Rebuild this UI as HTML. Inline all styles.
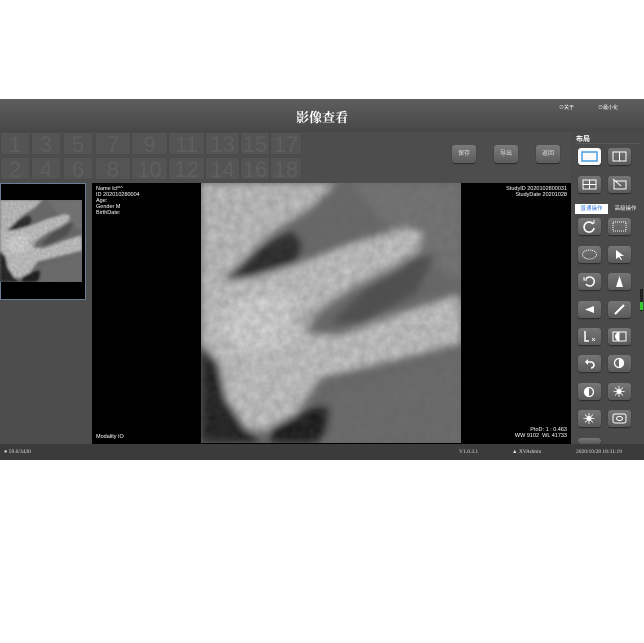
<!DOCTYPE html>
<html><head><meta charset="utf-8"><style>
*{margin:0;padding:0;box-sizing:border-box}
body{width:644px;height:643px;background:#fff;position:relative;overflow:hidden;font-family:"Liberation Sans","Noto Sans CJK SC",sans-serif}
.a{position:absolute}
#app{left:0;top:99px;width:644px;height:361px;background:#4d4d4d}
#hdr{left:0;top:0;width:644px;height:33px;background:linear-gradient(#5e5e5e,#474747)}
.cell{position:absolute;width:30px;height:23px;background:#545454;border:1px solid #4a4a4a;color:#5f5f5f;font-size:22px;text-align:center;line-height:23px;font-family:"Liberation Sans Narrow","Liberation Sans",sans-serif}
.btn{position:absolute;width:24px;height:18px;background:linear-gradient(#7a7a7a,#5c5c5c);border-radius:3px;color:#ddd;font-size:6px;text-align:center;line-height:18px;box-shadow:0 1px 1px #2a2a2a}
.ib{position:absolute;width:23px;height:17px;background:linear-gradient(#767676,#5a5a5a);border-radius:3px;box-shadow:0 1px 1px #2a2a2a}
.ib svg{position:absolute;left:0;top:0}
.t{color:#fff;font-size:5.5px;line-height:6px}
</style></head><body>
<div id="app" class="a">
 <div id="hdr" class="a">
  <div class="a" style="left:0;width:644px;top:8px;text-align:center;color:#fff;font-size:13px;font-weight:bold;font-family:'Noto Serif CJK SC',serif">影像查看</div>
  <div class="a" style="left:559px;top:5px;color:#fff;font-size:5px">⊙关于</div>
  <div class="a" style="left:598px;top:5px;color:#fff;font-size:5px">⊙最小化</div>
 </div>
 <div class="a" style="left:0;top:33px;width:302px;height:50px">
  <div class="cell" style="left:0;top:0">1</div><div class="cell" style="left:31px;top:0">3</div><div class="cell" style="left:63px;top:0">5</div><div class="cell" style="left:95px;top:0;width:36px">7</div><div class="cell" style="left:131px;top:0;width:37px">9</div><div class="cell" style="left:168px;top:0;width:37px">11</div><div class="cell" style="left:205px;top:0;width:35px">13</div><div class="cell" style="left:240px;top:0">15</div><div class="cell" style="left:270px;top:0;width:32px">17</div>
  <div class="cell" style="left:0;top:25px">2</div><div class="cell" style="left:31px;top:25px">4</div><div class="cell" style="left:63px;top:25px">6</div><div class="cell" style="left:95px;top:25px;width:36px">8</div><div class="cell" style="left:131px;top:25px;width:37px">10</div><div class="cell" style="left:168px;top:25px;width:37px">12</div><div class="cell" style="left:205px;top:25px;width:35px">14</div><div class="cell" style="left:240px;top:25px">16</div><div class="cell" style="left:270px;top:25px;width:32px">18</div>
 </div>
 <div class="btn" style="left:452px;top:46px">保存</div>
 <div class="btn" style="left:494px;top:46px">导出</div>
 <div class="btn" style="left:536px;top:46px">返回</div>
 <div class="a" style="left:0;top:84px;width:86px;height:117px;background:#000;border:1px solid #6a7f95"></div>
 <svg class="a" style="left:0;top:101px" width="82" height="82" viewBox="0 0 260 260"><use href="#xr"/></svg>
 <div class="a" style="left:92px;top:84px;width:479px;height:261px;background:#000"></div>
 <svg class="a" style="left:201px;top:84px" width="260" height="260" viewBox="0 0 260 260">
  <defs><g id="xr">
   <filter id="b"><feGaussianBlur stdDeviation="4"/></filter>
   <filter id="n"><feTurbulence type="fractalNoise" baseFrequency="0.12" numOctaves="3"/><feColorMatrix values="0 0 0 0 0.1  0 0 0 0 0.1  0 0 0 0 0.1  0 0 0 0.35 0"/></filter>
   <rect width="260" height="260" fill="#6a6a6a"/>
   <g filter="url(#b)">
    <path d="M150 0H260V100L200 60Z" fill="#767676"/>
    <path d="M0 0H135L110 25 70 50 40 80 20 98 0 100Z" fill="#c4c4c4"/>
    <path d="M22 98 55 65 90 48 100 60 95 85 60 95Z" fill="#262626"/>
    <path d="M130 140 165 105 215 75 235 70 215 110 160 140Z" fill="#4e4e4e"/>
    <path d="M0 100 50 95 100 80 150 60 205 45 222 50 215 70 160 98 120 125 105 150 140 152 200 130 255 112 260 118 260 160 190 178 120 195 95 230 85 250 40 245 20 215 0 175Z" fill="#c9c9c9"/>
    <path d="M0 160 18 180 25 215 45 245 60 260 0 260Z" fill="#1e1e1e"/>
    <path d="M68 245 100 228 135 222 125 250 115 260 70 260Z" fill="#161616"/>
    <path d="M130 215 200 190 260 170 260 260 125 260Z" fill="#6d6d6d"/>
    <path d="M15 140 40 115 90 110 85 165 40 170Z" fill="#dadada"/>
    <path d="M100 140 150 105 200 80" stroke="#9a9a9a" stroke-width="5" fill="none"/>
   </g>
   <rect width="260" height="260" filter="url(#n)"/>
  </g></defs>
  <use href="#xr"/>
 </svg>
 <div class="a t" style="left:96px;top:87px">Name lcf^^<br>ID 202010280004<br>Age:<br>Gender M<br>BirthDate:</div>
 <div class="a t" style="left:440px;top:87px;width:127px;text-align:right">StudyID 2020102800031<br>StudyDate 20201028</div>
 <div class="a t" style="left:96px;top:335px">Modality IO</div>
 <div class="a t" style="left:440px;top:328px;width:127px;text-align:right">PtoD: 1 : 0.463<br>WW 9102 &nbsp;WL 41733</div>
 <div class="a" style="left:571px;top:33px;width:73px;height:312px;background:#4a4a4a"></div>
 <div class="a" style="left:576px;top:35px;color:#fff;font-size:7px;font-weight:bold">布局</div>
 <div class="a" style="left:576px;top:44px;width:64px;height:1px;background:#5a5a5a"></div>
 <div class="ib" style="left:578px;top:49px;background:#fafafa"><svg width="23" height="17"><rect x="4" y="4" width="15" height="9" fill="none" stroke="#4aa0e0" stroke-width="1.5"/></svg></div>
 <div class="ib" style="left:608px;top:49px"><svg width="23" height="17"><rect x="5" y="4" width="13" height="9" fill="none" stroke="#fff"/><path d="M11.5 4V13" stroke="#fff"/></svg></div>
 <div class="ib" style="left:578px;top:77px"><svg width="23" height="17"><rect x="5" y="4" width="13" height="9" fill="none" stroke="#fff"/><path d="M11.5 4V13M5 8.5H18" stroke="#fff"/></svg></div>
 <div class="ib" style="left:608px;top:77px"><svg width="23" height="17"><rect x="6" y="5" width="12" height="8" fill="none" stroke="#fff"/><path d="M5 3 13 10" stroke="#fff"/></svg></div>
 <div class="a" style="left:575px;top:105px;width:33px;height:10px;background:#fff;color:#3a7bd5;font-size:5.5px;line-height:10px;text-align:center">普通操作</div>
 <div class="a" style="left:609px;top:105px;width:33px;height:10px;color:#eee;font-size:5.5px;line-height:10px;text-align:center">高级操作</div>
 <div class="a" style="left:640px;top:190px;width:3px;height:22px;background:#222"></div>
 <div class="a" style="left:640px;top:203px;width:3px;height:8px;background:#3c3"></div>
 <div class="ib" style="left:578px;top:119px"><svg width="23" height="17"><path d="M15 6A5 5 0 1 0 16 10" fill="none" stroke="#fff" stroke-width="1.6"/><path d="M13 5H16V2" fill="none" stroke="#fff"/></svg></div>
 <div class="ib" style="left:608px;top:119px"><svg width="23" height="17"><rect x="5" y="4" width="13" height="9" fill="none" stroke="#fff" stroke-dasharray="1 1"/></svg></div>
 <div class="ib" style="left:578px;top:147px"><svg width="23" height="17"><ellipse cx="11.5" cy="8.5" rx="7" ry="4.5" fill="none" stroke="#fff" stroke-dasharray="1 1"/></svg></div>
 <div class="ib" style="left:608px;top:147px"><svg width="23" height="17"><path d="M8 4 16 10 12 10 14 14 13 14 11 11 8 13Z" fill="#fff"/></svg></div>
 <div class="ib" style="left:578px;top:174px"><svg width="23" height="17"><path d="M8 6A4.5 4.5 0 1 1 8 11" fill="none" stroke="#fff" stroke-width="1.5"/><path d="M6 4V7H9" fill="none" stroke="#fff"/></svg></div>
 <div class="ib" style="left:608px;top:174px"><svg width="23" height="17"><path d="M11.5 3 15 14H8Z" fill="#fff"/></svg></div>
 <div class="ib" style="left:578px;top:202px"><svg width="23" height="17"><path d="M7 8.5 16 5V12Z" fill="#fff"/></svg></div>
 <div class="ib" style="left:608px;top:202px"><svg width="23" height="17"><path d="M7 13 16 4" stroke="#fff" stroke-width="2"/></svg></div>
 <div class="ib" style="left:578px;top:229px"><svg width="23" height="17"><path d="M7 3V13H11" stroke="#fff" stroke-width="1.5" fill="none"/><path d="M14 10 17 13M17 10 14 13" stroke="#fff" stroke-width=".7"/></svg></div>
 <div class="ib" style="left:608px;top:229px"><svg width="23" height="17"><rect x="5" y="4" width="13" height="9" fill="none" stroke="#fff"/><path d="M11.5 4A4.5 4.5 0 0 0 11.5 13Z" fill="#fff"/></svg></div>
 <div class="ib" style="left:578px;top:256px"><svg width="23" height="17"><path d="M8 7H13A3 3 0 0 1 13 13" fill="none" stroke="#fff" stroke-width="1.6"/><path d="M7 7 10 4V10Z" fill="#fff"/></svg></div>
 <div class="ib" style="left:608px;top:256px"><svg width="23" height="17"><circle cx="11" cy="8" r="4.5" fill="none" stroke="#fff" stroke-width="1.3"/><path d="M11 3.5A4.5 4.5 0 0 1 11 12.5Z" fill="#fff"/></svg></div>
 <div class="ib" style="left:578px;top:284px"><svg width="23" height="17"><circle cx="11" cy="9" r="4.5" fill="none" stroke="#fff" stroke-width="1.3"/><path d="M11 4.5A4.5 4.5 0 0 0 11 13.5Z" fill="#fff"/></svg></div>
 <div class="ib" style="left:608px;top:284px"><svg width="23" height="17"><circle cx="11" cy="8.5" r="2.5" fill="#fff"/><path d="M11 3V14M5.5 8.5H16.5M7 4.5 15 12.5M15 4.5 7 12.5" stroke="#fff" stroke-width=".8"/></svg></div>
 <div class="ib" style="left:578px;top:311px"><svg width="23" height="17"><circle cx="11" cy="8.5" r="2.5" fill="#fff"/><path d="M11 3V14M5.5 8.5H16.5M7 4.5 15 12.5M15 4.5 7 12.5" stroke="#fff" stroke-width=".8"/></svg></div>
 <div class="ib" style="left:608px;top:311px"><svg width="23" height="17"><rect x="5" y="4" width="13" height="9" rx="2" fill="none" stroke="#fff"/><ellipse cx="11.5" cy="8.5" rx="3" ry="2" fill="none" stroke="#fff"/></svg></div>
 <div class="ib" style="left:578px;top:339px;height:6px"></div>
 <div class="a" style="left:0;top:345px;width:644px;height:16px;background:#3b3b3b;color:#ddd;font-size:5.5px;line-height:16px;font-family:'Liberation Serif',serif">
  <span class="a" style="left:4px">● 59.6/3430</span>
  <span class="a" style="left:459px">V1.0.3.1</span>
  <span class="a" style="left:512px">▲ XVAdmin</span>
  <span class="a" style="left:576px">2020/10/28 18:31:19</span>
 </div>
</div>
</body></html>
